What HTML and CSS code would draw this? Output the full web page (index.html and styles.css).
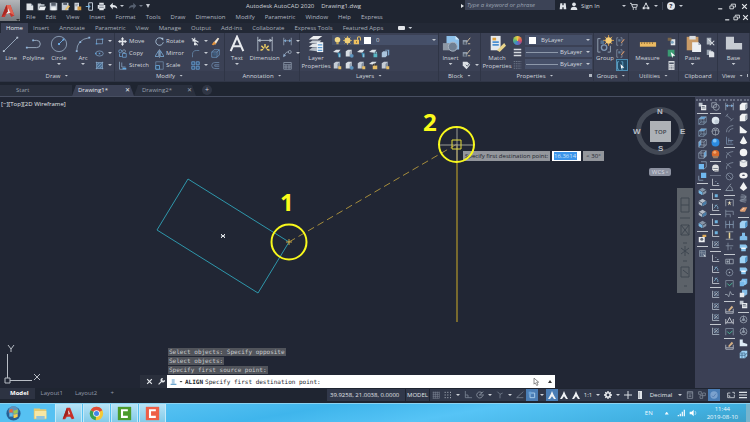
FILE: index.html
```
<!DOCTYPE html>
<html lang="en">
<head>
<meta charset="utf-8">
<title>Autodesk AutoCAD 2020 - Drawing1.dwg</title>
<link rel="stylesheet" href="styles.css">
</head>
<body>
<svg class="defs" aria-hidden="true">
<defs>
<symbol id="new" viewBox="0 0 12 12"><path d="M2 2h6l3 3v6H2z" fill="#dfe3e8"/><path d="M8 2v3h3" fill="#8d96a3"/></symbol>
<symbol id="open" viewBox="0 0 12 12"><path d="M1 2h4l1 1h4v2H4l-2 6H1z" fill="#c9cfd6"/><path d="M4 6h8l-2 5H2z" fill="#eef1f4"/></symbol>
<symbol id="save" viewBox="0 0 12 12"><path d="M1 1h9l1 1v9H1z" fill="#c3cad3"/><path d="M3 1h6v4H3z" fill="#59616f"/><path d="M3 7h6v4H3z" fill="#f2f4f6"/></symbol>
<symbol id="saveas" viewBox="0 0 12 12"><path d="M1 1h9v10H1z" fill="#c3cad3"/><path d="M3 1h5v3H3z" fill="#59616f"/><path d="M5 10l5-6 2 2-5 5z" fill="#e5bd68"/></symbol>
<symbol id="doc" viewBox="0 0 12 12"><path d="M2 1h6v10H2z" fill="#d9dde2"/><path d="M6 6h5v5H6z" fill="#d29a45"/><path d="M3 3h4M3 5h3" stroke="#70788a"/></symbol>
<symbol id="phone" viewBox="0 0 12 12"><path d="M5 1h5v10H5z" fill="none" stroke="#bfc9d5" stroke-width="1.3"/><path d="M1 6h5M4 4l3 2-3 2" fill="none" stroke="#79b3df" stroke-width="1.3"/></symbol>
<symbol id="print" viewBox="0 0 12 12"><path d="M3 1h6v3h2v5H9v2H3V9H1V4h2z" fill="#dfe3e8"/><path d="M3 7h6M3 4h6" stroke="#565f6e"/></symbol>
<symbol id="undo" viewBox="0 0 12 12"><path d="M1 5l4-4v3c4 0 6 2 6 5-2-2-3-2-6-2v3z" fill="#e3e7ec"/></symbol>
<symbol id="redo" viewBox="0 0 12 12"><path d="M11 5L7 1v3C3 4 1 6 1 9c2-2 3-2 6-2v3z" fill="#566070"/></symbol>
<symbol id="binoc" viewBox="0 0 12 12"><path d="M2 2h3v3h2V2h3l1 9H7V8H5v3H1z" fill="#dfe3e8"/></symbol>
<symbol id="user" viewBox="0 0 12 12"><circle cx="6" cy="3.5" r="2.8" fill="#dfe3e8"/><path d="M1 12c0-4 2-5 5-5s5 1 5 5z" fill="#dfe3e8"/></symbol>
<symbol id="cart" viewBox="0 0 12 12"><path d="M0 2h2l2 6h6l1-4H3" fill="none" stroke="#dfe3e8" stroke-width="1.4"/><circle cx="5" cy="10.5" r="1.1" fill="#dfe3e8"/><circle cx="9" cy="10.5" r="1.1" fill="#dfe3e8"/></symbol>
<symbol id="tri" viewBox="0 0 12 12"><path d="M6 2L2 9h8z" fill="none" stroke="#dfe3e8" stroke-width="1.4"/><path d="M1 8h3v3H1zM8 8h3v3H8zM5 1h2v2H5z" fill="#dfe3e8"/></symbol>
<symbol id="min" viewBox="0 0 12 12"><path d="M2 9h7v2H2z" fill="#e6e9ed"/></symbol>
<symbol id="restore" viewBox="0 0 12 12"><path d="M4 4V2h7v5H9M1.500 5h6v5h-6z" fill="none" stroke="#e6e9ed" stroke-width="1.500"/></symbol>
<symbol id="close" viewBox="0 0 12 12"><path d="M2 2l8 8M10 2l-8 8" stroke="#e6e9ed" stroke-width="2"/></symbol>

<symbol id="rect" viewBox="0 0 12 12"><path d="M2 3h8v6H2z" fill="none" stroke="#7f9fc0"/><path d="M1 8h2v2H1zM9 2h2v2H9z" fill="#5fa0d8"/></symbol>
<symbol id="ellipse" viewBox="0 0 12 12"><ellipse cx="6" cy="6" rx="5" ry="3.400" fill="none" stroke="#7f9fc0"/><path d="M5 5h2v2H5zM0 5h2v2H0z" fill="#5fa0d8"/></symbol>
<symbol id="hatch" viewBox="0 0 12 12"><path d="M2 2h8v8H2z" fill="#4d6f93"/><path d="M1 2h10M1 10h10M2 1v10M10 1v10M3 9l6-6M3 5l2-2M7 9l2-2" stroke="#8fb2d4" stroke-width=".8"/></symbol>
<symbol id="move" viewBox="0 0 12 12"><path d="M6 0l2.200 3H7v2h2V3.800L12 6 9 8.200V7H7v2h1.200L6 12 3.800 9H5V7H3v1.200L0 6l3-2.200V5h2V3H3.800z" fill="#e3e7ec"/></symbol>
<symbol id="copy" viewBox="0 0 12 12"><circle cx="3" cy="3" r="2" fill="none" stroke="#6ea6d8"/><circle cx="8" cy="3" r="2" fill="none" stroke="#8aa1ba"/><path d="M6 6h5v5H6zM2 6v4h3" fill="none" stroke="#6ea6d8"/></symbol>
<symbol id="stretch" viewBox="0 0 12 12"><path d="M2 1v10h9M5 2v6h5" fill="none" stroke="#8aa8c5"/><path d="M6 9h5v2H6z" fill="#62a8e2"/></symbol>
<symbol id="rotate" viewBox="0 0 12 12"><path d="M9 2a5 5 0 1 0 2 5" fill="none" stroke="#a8bfd6" stroke-width="1.200"/><path d="M7 1h4v4z" fill="#a8bfd6"/></symbol>
<symbol id="mirror" viewBox="0 0 12 12"><path d="M5 2v8H0zM7 2v8h5z" fill="none" stroke="#7fb0dc"/><path d="M6 0v12" stroke="#b9c7d6" stroke-width=".6"/></symbol>
<symbol id="scale" viewBox="0 0 12 12"><path d="M1 1h10v10H1z" fill="none" stroke="#6d8aa8"/><path d="M1 6h5v5H1z" fill="#31465f" stroke="#6eb0ea"/></symbol>
<symbol id="trim" viewBox="0 0 12 12"><path d="M1 2l9 5M5 1v6l4 4" stroke="#dfe3e8" stroke-width="1.400" fill="none"/><path d="M2 4h5v2H2zM4 8h3v3H4z" fill="#dfe3e8"/></symbol>
<symbol id="fillet" viewBox="0 0 12 12"><path d="M2 11V7c0-3 2-5 5-5h4" fill="none" stroke="#6386a8" stroke-width="1.100"/></symbol>
<symbol id="array" viewBox="0 0 12 12"><path d="M1 1h4v4H1zM7 1h4v4H7zM1 7h4v4H1zM7 7h4v4H7z" fill="#34547a" stroke="#6ea6d8"/></symbol>
<symbol id="erase" viewBox="0 0 12 12"><path d="M3 8l6-7 2 1-5 8z" fill="#efe3d0"/><path d="M1 10l3-4 3 3-4 2z" fill="#e0913d"/></symbol>
<symbol id="box" viewBox="0 0 12 12"><path d="M1 4h7v7H1zM1 4l3-3h7v7l-3 3M8 4l3-3" fill="none" stroke="#6b9cca"/><path d="M3 5h4v4H3z" fill="#3c5c7e"/></symbol>
<symbol id="offset" viewBox="0 0 12 12"><path d="M11 2H5a4 4 0 0 0 0 8h6M11 5H5v2h6" fill="none" stroke="#6f8eb0"/></symbol>
<symbol id="dim" viewBox="0 0 12 12"><path d="M1 1v10M11 1v10M1 5h10" fill="none" stroke="#9eacbd"/><path d="M1 5l3-2v4zM11 5L8 3v4z" fill="#79a7d2"/></symbol>
<symbol id="leader" viewBox="0 0 12 12"><path d="M1 9l4-5h3" fill="none" stroke="#9eacbd"/><circle cx="9" cy="4" r="2" fill="none" stroke="#9eacbd"/><path d="M0 11l1-5 3 3z" fill="#8ba8c7"/></symbol>
<symbol id="table" viewBox="0 0 12 12"><path d="M1 2h10v9H1zM1 5h10M1 8h10M4 5v6M8 5v6" fill="none" stroke="#9eacbd" stroke-width=".9"/></symbol>
<symbol id="bulb" viewBox="0 0 12 12"><circle cx="6" cy="5" r="3.700" fill="#f2d98a"/><path d="M4.500 8h3v3h-3z" fill="#c8a95a"/></symbol>
<symbol id="sun" viewBox="0 0 12 12"><path d="M6 0v12M0 6h12M2 2l8 8M10 2l-8 8" stroke="#d8b35a"/><circle cx="6" cy="6" r="4" fill="#f0cf78"/></symbol>
<symbol id="lock" viewBox="0 0 12 12"><path d="M6 5V3q0-2 2-2t2 2v3" fill="none" stroke="#e5bd60" stroke-width="1.400"/><path d="M1 5h7v6H1z" fill="#efc060"/><path d="M4 7h1v2H4z" fill="#4c4638"/></symbol>
<symbol id="la" viewBox="0 0 12 12"><path d="M0 4l4-3h6L7 5z" fill="#dce2e8"/><path d="M6 5h4v6H7z" fill="#3f8fb4"/><path d="M9 7v4" stroke="#d8e4ee"/></symbol>
<symbol id="lb" viewBox="0 0 12 12"><path d="M1 3l3-2h5v7l-3 2H1z" fill="#d8dde3"/><path d="M6 4l3-3v7l-3 2z" fill="#98a3b2"/><circle cx="9" cy="9" r="2.500" fill="#5c93be"/></symbol>
<symbol id="lc" viewBox="0 0 12 12"><path d="M1 3l3-2h5v7l-3 2H1z" fill="#c5ccd5"/><path d="M6 4l3-3v7l-3 2z" fill="#7e8a9a"/><path d="M7 7h4v4H7z" fill="#e6bd65"/></symbol>
<symbol id="ld" viewBox="0 0 12 12"><path d="M0 4l4-3h6L7 5z" fill="#dce2e8"/><path d="M6 6h5v5H6z" fill="#58b7c4"/><path d="M7 6V4h3v2" fill="none" stroke="#9bd4dd"/></symbol>
<symbol id="lu" viewBox="0 0 12 12"><path d="M0 4l4-3h6L7 5z" fill="#dce2e8"/><path d="M5 6h6v5H5z" fill="#e6bd65"/><path d="M6 6V4h3v2" fill="none" stroke="#39332b" stroke-width="1.200"/></symbol>
<symbol id="le" viewBox="0 0 12 12"><path d="M1 5l2-2h5v6l-2 2H1z" fill="#aac4dc"/><path d="M5 2l1-1h5v7l-2 1V2z" fill="#7ba5ca"/></symbol>
<symbol id="bed" viewBox="0 0 12 12"><path d="M1 4h6v6H1z" fill="#8b98aa"/><circle cx="4" cy="8" r="2" fill="#56606f"/><path d="M6 7l5-6M8 9h3" stroke="#d9c3a3" stroke-width="1.200"/></symbol>
<symbol id="tag" viewBox="0 0 12 12"><path d="M1 1h6l4 4-5 6-5-5z" fill="#dde1e6"/><path d="M5 5l2 2 4-5" fill="none" stroke="#555f70" stroke-width="1.200"/></symbol>
<symbol id="lw" viewBox="0 0 12 12"><path d="M1 1h10v2H1zM1 5h10v2H1zM1 9h10v2H1z" fill="#d5d9df"/></symbol>
<symbol id="lt" viewBox="0 0 12 12"><path d="M1 2h10M1 5h10M1 8h10M1 11h10" stroke="#7b8596" stroke-dasharray="2 1"/></symbol>
<symbol id="grp" viewBox="0 0 12 12"><path d="M3 1H1v10h2M6 1h2v4M6 11h2V8" fill="none" stroke="#8997a9"/><path d="M3 3h3v3H3z" fill="#64809c"/><path d="M7 8l4-5" stroke="#d79a6d" stroke-width="1.500"/></symbol>
<symbol id="grpsel" viewBox="0 0 12 12"><path d="M4 1H2v10h2M7 1h2v10H7" fill="none" stroke="#6fb4d8"/><path d="M6 4l5 5H8l-1 2z" fill="#fff"/></symbol>
<symbol id="quick" viewBox="0 0 12 12"><path d="M5 3h6v8H5z" fill="#dfe4e9"/><path d="M1 1h5v4H1z" fill="#7a674b"/><circle cx="7" cy="7" r="2" fill="#78a2bf"/></symbol>
<symbol id="green" viewBox="0 0 12 12"><path d="M1 1h9v9H1z" fill="#3b9b73"/><path d="M5 4l6 5H8l-1 3z" fill="#fff"/></symbol>
<symbol id="calc" viewBox="0 0 12 12"><path d="M2 0h8v12H2z" fill="#d4d8dd"/><path d="M3 2h6v2H3z" fill="#4b5364"/><path d="M4 6v5M6 6v5M8 6v5" stroke="#4b5364" stroke-dasharray="1 1"/></symbol>
<symbol id="props" viewBox="0 0 12 12"><path d="M2 1h8v10H2zM2 3h8M4 6h4M4 8h4" fill="none" stroke="#98a1af"/></symbol>
<symbol id="cut" viewBox="0 0 12 12"><path d="M1 1h6v9H1z" fill="#aab2bc"/><path d="M3 3l8 8M11 5l-6 6" stroke="#dfe3e8" stroke-width="1.400"/></symbol>
<symbol id="cpy" viewBox="0 0 12 12"><path d="M1 1h6v7H1z" fill="#9aa4b1"/><path d="M4 3h5l2 2v6H4z" fill="#dfe3e8"/></symbol>

<symbol id="stack" viewBox="0 0 12 12"><path d="M1 1h5v5H1z" fill="#bfc6cf"/><path d="M4 4h7v7H4z" fill="#e7eaee"/><path d="M5 6h4M5 8h5" stroke="#4f586a"/></symbol>
<symbol id="cubet" viewBox="0 0 12 12"><path d="M1 4l3-3h7L8 4z" fill="#5fa2da"/><path d="M1 4h7v7H1zM1 4l3-3h7v7l-3 3M8 4l3-3M4 1v7h7M4 8l-3 3" fill="none" stroke="#8ea7c0" stroke-width=".8"/></symbol>
<symbol id="cubel" viewBox="0 0 12 12"><path d="M1 4l3-3v7l-3 3z" fill="#5fa2da"/><path d="M1 4h7v7H1zM1 4l3-3h7v7l-3 3M8 4l3-3M4 1v7h7" fill="none" stroke="#a5b4c5" stroke-width=".8"/></symbol>
<symbol id="cuber" viewBox="0 0 12 12"><path d="M8 4l3-3v7l-3 3z" fill="#5fa2da"/><path d="M1 4h7v7H1zM1 4l3-3h7v7l-3 3M8 4l3-3M4 1v7h7" fill="none" stroke="#a5b4c5" stroke-width=".8"/></symbol>
<symbol id="cubef" viewBox="0 0 12 12"><path d="M4 1h7v7l-3 3" fill="none" stroke="#91a8c0"/><path d="M1 4h7v7H1z" fill="#70b8ef"/></symbol>
<symbol id="cubeb" viewBox="0 0 12 12"><path d="M1 5v6h6" fill="none" stroke="#91a8c0"/><path d="M4 1h7v7H4z" fill="#70b8ef"/></symbol>
<symbol id="iso" viewBox="0 0 12 12"><path d="M6 1l5 3v4l-5 3-5-3V4z" fill="#b4bec9"/><path d="M1 4l5 3 5-3M6 7v5" fill="none" stroke="#3a4356"/><path d="M6 7l5-3v4l-5 3z" fill="#487ca8"/></symbol>
<symbol id="isol" viewBox="0 0 12 12"><path d="M6 1l5 3v4l-5 3-5-3V4z" fill="#8795a6"/><path d="M1 4l5 3 5-3M6 7v5" fill="none" stroke="#2c3444"/><path d="M1 4l5 3v4L1 8z" fill="#74b8e4"/></symbol>
<symbol id="cam" viewBox="0 0 12 12"><path d="M1 4h8v7H1z" fill="#eceef0"/><circle cx="5" cy="7" r="2" fill="#606875"/><path d="M6 1h5v3H6z" fill="#e2ae58"/></symbol>
<symbol id="sel" viewBox="0 0 12 12"><path d="M2 2h8v8H2zM2 5h8M5 2v8" fill="#50617a" stroke="#8793a3"/><path d="M7 6l4 4H8z" fill="#cfd5dc"/></symbol>
<symbol id="wire" viewBox="0 0 12 12"><path d="M1 1h6v6H1z" fill="none" stroke="#a6afbb"/><circle cx="7" cy="7" r="4" fill="none" stroke="#a6afbb"/></symbol>
<symbol id="sphw" viewBox="0 0 12 12"><circle cx="6" cy="6" r="5" fill="#dfe8ef"/><circle cx="7.500" cy="7.500" r="3" fill="#c2ced9"/></symbol>
<symbol id="sphn" viewBox="0 0 12 12"><circle cx="6" cy="6" r="4.700" fill="none" stroke="#aab3bf"/><path d="M1 6l5-2 5 2M6 4v7M3 2l3 2 3-2" fill="none" stroke="#aab3bf" stroke-width=".8"/></symbol>
<symbol id="sphb" viewBox="0 0 12 12"><circle cx="6" cy="6" r="5.300" fill="#2b8be0"/><circle cx="5" cy="3.500" r="2.500" fill="#7cc3f8"/></symbol>
<symbol id="spho" viewBox="0 0 12 12"><circle cx="6" cy="5" r="5" fill="#d6692c"/><path d="M2 8h8l-1 3H3z" fill="#9b7c62"/><circle cx="5" cy="3" r="2" fill="#f0a56b"/></symbol>
<symbol id="sphs" viewBox="0 0 12 12"><circle cx="6" cy="5" r="4.500" fill="#dfe1e2"/><path d="M1 7h9v3H5z" fill="#efefed"/><path d="M3 6h6M4 9h5" stroke="#606875"/></symbol>
<symbol id="ucs" viewBox="0 0 12 12"><path d="M2 1v9h9" fill="none" stroke="#d5dae0"/><path d="M6 4h1v1H6zM8 7h2v1H8z" fill="#b7cfdf"/></symbol>
<symbol id="ucsb" viewBox="0 0 12 12"><path d="M2 1v9h9" fill="none" stroke="#d5dae0"/><path d="M5 3h4v4H5z" fill="#6eb3df"/></symbol>
<symbol id="ucsc" viewBox="0 0 12 12"><path d="M2 1v9h9" fill="none" stroke="#d5dae0"/><path d="M4 7l4-5M5 3q5 0 4 5" fill="none" stroke="#82b5d5"/></symbol>
<symbol id="ucsx" viewBox="0 0 12 12"><path d="M2 1v9h9M4 2l6 6M10 2L4 8" fill="none" stroke="#b8c3cf"/><circle cx="7" cy="5" r="3" fill="none" stroke="#7790aa"/></symbol>
<symbol id="dal" viewBox="0 0 12 12"><path d="M2 3l7 6M1 5l3-4M7 11l4-4" fill="none" stroke="#8894a5"/></symbol>
<symbol id="arc" viewBox="0 0 12 12"><path d="M2 11q0-8 9-9M5 11q0-4 6-5" fill="none" stroke="#8894a5"/></symbol>
<symbol id="ord" viewBox="0 0 12 12"><path d="M2 1v10h9M5 3v6M8 5v4M4 6h7" fill="none" stroke="#7b92af"/></symbol>
<symbol id="rad" viewBox="0 0 12 12"><path d="M2 11q-1-8 9-9M2 3l6 6" fill="none" stroke="#8894a5"/></symbol>
<symbol id="dia" viewBox="0 0 12 12"><circle cx="6" cy="6" r="4.500" fill="none" stroke="#8894a5"/><path d="M3 3l6 6" stroke="#8894a5"/></symbol>
<symbol id="ang" viewBox="0 0 12 12"><path d="M8 1L1 10h10M7 4q3 2 3 6" fill="none" stroke="#9aa5b3"/></symbol>
<symbol id="dimq" viewBox="0 0 12 12"><path d="M1 11V2h10v9" fill="none" stroke="#a6afbb"/><path d="M6 4l1 2h2L7 7l1 3-2-2-2 2 1-3-2-1h2z" fill="#ece1bd"/></symbol>
<symbol id="dimb" viewBox="0 0 12 12"><path d="M1 1v10M1 3h10v5M1 7h6v4" fill="none" stroke="#8894a5"/></symbol>
<symbol id="dimc" viewBox="0 0 12 12"><path d="M1 1v10M6 1v10M11 1v10M1 6h10" fill="none" stroke="#8aa0b9"/></symbol>
<symbol id="dimi" viewBox="0 0 12 12"><path d="M1 1h10M1 11h10" stroke="#a6afbb"/><path d="M5 2h2v8H5z" fill="#e9d695"/></symbol>
<symbol id="dimx" viewBox="0 0 12 12"><path d="M1 5h10M4 1v10M8 7v3" fill="none" stroke="#8894a5"/></symbol>
<symbol id="tol" viewBox="0 0 12 12"><path d="M1 3h10v6H1zM6 3v6" fill="none" stroke="#a6afbb"/><circle cx="3.500" cy="6" r="1.500" fill="#a6afbb"/></symbol>
<symbol id="cen" viewBox="0 0 12 12"><circle cx="6" cy="6" r="4.500" fill="none" stroke="#8894a5"/><path d="M5 6h2M6 5v2" stroke="#b9c1cb"/></symbol>
<symbol id="insp" viewBox="0 0 12 12"><path d="M1 11V2h10v9" fill="none" stroke="#8894a5"/><path d="M3 6l3 3 4-4" fill="none" stroke="#48b894" stroke-width="1.300"/></symbol>
<symbol id="jog" viewBox="0 0 12 12"><path d="M0 6h3l2 3 2-7 2 4h3" fill="none" stroke="#a6afbb"/></symbol>
<symbol id="ded" viewBox="0 0 12 12"><path d="M1 5v6h10V5M1 9h10" fill="none" stroke="#c4cad2"/><path d="M4 7l5-6 2 2-5 5z" fill="#d7b184"/></symbol>
<symbol id="dtx" viewBox="0 0 12 12"><path d="M1 4v7M11 4v7M1 9h10M3 8l3-6 3 6" fill="none" stroke="#e0e4e9"/></symbol>
<symbol id="solbox" viewBox="0 0 12 12"><path d="M1 4l3-3h7v7l-3 3H1z" fill="#f2f3f4"/><path d="M8 4l3-3v7l-3 3z" fill="#a7afb9"/></symbol>
<symbol id="solw" viewBox="0 0 12 12"><path d="M1 1l10 8-2 2H1z" fill="#f2f3f4"/></symbol>
<symbol id="solc" viewBox="0 0 12 12"><path d="M6 0l5 9q-5 4-10 0z" fill="#f2f3f4"/></symbol>
<symbol id="pyr" viewBox="0 0 12 12"><path d="M6 0l5 8-5 4-5-4z" fill="#f2f3f4"/></symbol>
<symbol id="sols" viewBox="0 0 12 12"><circle cx="6" cy="6" r="5" fill="#f2f3f4"/></symbol>
<symbol id="soly" viewBox="0 0 12 12"><path d="M1 3q5-4 10 0v6q-5 4-10 0z" fill="#e9ebed"/><path d="M1 3q5 3 10 0" fill="none" stroke="#9ca5b1"/></symbol>
<symbol id="solt" viewBox="0 0 12 12"><ellipse cx="6" cy="6" rx="5.500" ry="4" fill="#f2f3f4"/><ellipse cx="6" cy="5.500" rx="2" ry="1" fill="#3b4155"/></symbol>
<symbol id="helix" viewBox="0 0 12 12"><path d="M2 3h8M2 5h8M2 7h8M2 9h8" stroke="#8b96a6"/><path d="M3 1q6 0 6 3t-6 4 6 3" fill="none" stroke="#8b96a6"/></symbol>
<symbol id="plane" viewBox="0 0 12 12"><path d="M1 7l4-4h6L8 9H2z" fill="#dc9c72"/><path d="M4 7l3-3" stroke="#fff0dc"/></symbol>
<symbol id="bbox" viewBox="0 0 12 12"><path d="M1 4l3-3h7v7l-3 3H1z" fill="#9fd2f4"/><path d="M8 4l3-3v7l-3 3z" fill="#559bd0"/></symbol>
<symbol id="bcyl" viewBox="0 0 12 12"><path d="M4 1h4v4l3 1v5H1V6l3-1z" fill="#80bfec"/></symbol>
<symbol id="bcup" viewBox="0 0 12 12"><path d="M1 2h8l2 2v3H9v4H3V7H1z" fill="#8bc6ef"/><path d="M3 7h6" stroke="#f2f8fd" stroke-width="2"/></symbol>
<symbol id="buni" viewBox="0 0 12 12"><path d="M4 1h7v6l-2 2H8l-2 2H1V5l2-1z" fill="#78b9ea"/><path d="M1 5l2-1h5v5" fill="none" stroke="#b9def8"/></symbol>
<symbol id="bsub" viewBox="0 0 12 12"><path d="M4 1h7v6l-3 2H4z" fill="#85bde8"/><path d="M1 5h6v6H1z" fill="#e7eaee"/></symbol>
<symbol id="gear3" viewBox="0 0 12 12"><circle cx="6" cy="6" r="4.500" fill="none" stroke="#9da7b5"/><circle cx="6" cy="6" r="2" fill="#8b96a6"/><path d="M6 1v3M2 9l2-2M10 9L8 7" stroke="#9da7b5"/></symbol>
<symbol id="bl" viewBox="0 0 12 12"><path d="M1 2h4v4l6 2v3H1z" fill="#ddebf5"/></symbol>
<symbol id="bgrid" viewBox="0 0 12 12"><path d="M1 4l3-3h7v7l-3 3H1z" fill="#9fd2f4"/><path d="M1 7h7l3-3M4 4v7M1 4h7v7" fill="none" stroke="#42698b"/></symbol>

<symbol id="g1" viewBox="0 0 12 12"><path d="M2 1v10M5 1v10M8 1v10M11 1v10M1 2h10M1 5h10M1 8h10M1 11h10" stroke="#858e9d" stroke-width=".8"/></symbol>
<symbol id="g2" viewBox="0 0 12 12"><path d="M1 2h10M1 6h10M1 10h10" stroke="#b6bdc7" stroke-width="1.500" stroke-dasharray="1.500 2.500"/></symbol>
<symbol id="ortho" viewBox="0 0 12 12"><path d="M2 0v10h10M2 6h4v4" fill="none" stroke="#8b95a4"/></symbol>
<symbol id="polar" viewBox="0 0 12 12"><path d="M9 3a4.500 4.500 0 1 0 1 4M5 6h7M5 6l6-5" fill="none" stroke="#a5aeba"/></symbol>
<symbol id="isod" viewBox="0 0 12 12"><path d="M2 1l4 4v6M6 5l4-2" fill="none" stroke="#858f9e"/></symbol>
<symbol id="angl" viewBox="0 0 12 12"><path d="M11 1L1 10h10" fill="none" stroke="#858f9e"/></symbol>
<symbol id="osnap" viewBox="0 0 12 12"><path d="M3 3h7v7H3z" fill="none" stroke="#b3d4f0" stroke-width="1.300"/><path d="M1 1h4v4H1z" fill="#6aa5dc"/></symbol>
<symbol id="ann" viewBox="0 0 12 12"><path d="M6 0l2 5 4 7H9L6 8l-3 4H0l4-7z" fill="#eef1f4"/></symbol>
<symbol id="gear" viewBox="0 0 12 12"><path d="M6 0v12M0 6h12M2 2l8 8M10 2l-8 8" stroke="#f0f2f5" stroke-width="2"/><circle cx="6" cy="6" r="3.200" fill="#31384a" stroke="#f0f2f5" stroke-width="2"/></symbol>
<symbol id="plus" viewBox="0 0 12 12"><path d="M6 0v12M0 6h12" stroke="#d9dde3" stroke-width="1.500"/></symbol>
<symbol id="bar" viewBox="0 0 12 12"><path d="M3 0h6v12H3z" fill="#dfe2e6"/><path d="M4 3h2M4 6h2M4 9h2" stroke="#606979"/></symbol>
<symbol id="iso2" viewBox="0 0 12 12"><path d="M1 1h4v4H1zM7 3h4v4H7zM3 7h4v4H3z" fill="none" stroke="#8b95a4"/></symbol>
<symbol id="perf" viewBox="0 0 12 12"><circle cx="6" cy="6" r="5.500" fill="#7ba2ce"/><path d="M3 7l2 2 4-5" fill="none" stroke="#5b82b4" stroke-width="1.500"/></symbol>
<symbol id="full" viewBox="0 0 12 12"><path d="M5 3H1v7h10V6M8 2h3v3M3 8V6M3 8h2" fill="none" stroke="#d6dae0" stroke-width="1.200"/></symbol>
<symbol id="burger" viewBox="0 0 12 12"><path d="M0 2h12M0 6h12M0 10h12" stroke="#dfe3e8" stroke-width="1.700"/></symbol>
</defs>
</svg>

<header class="top">
  <button class="app" aria-label="Application menu"><svg viewBox="0 0 20 20"><path d="M2 17L8 2h5l5 13-4 2-2-4H8l-2 4z" fill="#c5362f"/><path d="M8 2l2 8 8 5-5-13z" fill="#e26553"/><path d="M8 13l2-7 3 6z" fill="#ececec"/><path d="M2 17l8-7-2-8z" fill="#a92822"/></svg><i class="caret dark"></i></button>
  <div class="bars">
    <div class="title">
      <div class="qat">
        <button aria-label="New"><svg><use href="#new"/></svg></button><button aria-label="Open"><svg><use href="#open"/></svg></button><button aria-label="Save"><svg><use href="#save"/></svg></button><button aria-label="Save as"><svg><use href="#saveas"/></svg></button><button aria-label="Web"><svg><use href="#doc"/></svg></button><button aria-label="Mobile"><svg><use href="#phone"/></svg></button><button aria-label="Plot"><svg><use href="#print"/></svg></button><button aria-label="Undo"><svg><use href="#undo"/></svg></button><i class="caret"></i><button aria-label="Redo"><svg><use href="#redo"/></svg></button><i class="caret dim"></i><i class="caret big"></i>
      </div>
      <h1><span>Autodesk AutoCAD 2020</span><span>Drawing1.dwg</span></h1>
      <div class="info">
        <i class="play"></i><input type="search" aria-label="Search" placeholder="Type a keyword or phrase">
        <button aria-label="Find"><svg><use href="#binoc"/></svg></button><button class="sign"><svg><use href="#user"/></svg>Sign In</button>
        <span class="tail"><i class="caret"></i><button aria-label="Store"><svg><use href="#cart"/></svg></button><button aria-label="Stay connected"><svg><use href="#tri"/></svg></button><i class="caret"></i><i class="rule"></i><button class="help" aria-label="Help">?</button><i class="caret"></i></span>
        <span class="win"><button aria-label="Minimize"><svg><use href="#min"/></svg></button><button aria-label="Restore"><svg><use href="#restore"/></svg></button><button aria-label="Close"><svg><use href="#close"/></svg></button></span>
      </div>
    </div>
    <nav class="menu">
      <a href="#">File</a><a href="#">Edit</a><a href="#">View</a><a href="#">Insert</a><a href="#">Format</a><a href="#">Tools</a><a href="#">Draw</a><a href="#">Dimension</a><a href="#">Modify</a><a href="#">Parametric</a><a href="#">Window</a><a href="#">Help</a><a href="#">Express</a>
      <span class="win small"><button aria-label="Minimize drawing"><svg><use href="#min"/></svg></button><button aria-label="Restore drawing"><svg><use href="#restore"/></svg></button><button aria-label="Close drawing"><svg><use href="#close"/></svg></button></span>
    </nav>
  </div>
</header>

<nav class="rtabs">
  <a class="on" href="#">Home</a><a href="#">Insert</a><a href="#">Annotate</a><a href="#">Parametric</a><a href="#">View</a><a href="#">Manage</a><a href="#">Output</a><a href="#">Add-ins</a><a href="#">Collaborate</a><a href="#">Express Tools</a><a href="#">Featured Apps</a>
  <button class="pill" aria-label="Minimize ribbon"><b></b><i class="caret"></i></button>
</nav>

<section class="ribbon">
  <div class="panel">
    <div class="body draw">
      <button class="bigb"><svg viewBox="0 0 20 20"><path d="M2 18L17 3" stroke="#9fb0c4"/><path d="M1 17h2v2H1zM16 2h2v2h-2z" fill="#b9c6d6"/></svg>Line</button>
      <button class="bigb"><svg viewBox="0 0 20 20"><path d="M2 14h11a4 4 0 0 0 0-8H9" fill="none" stroke="#9fb0c4"/><path d="M1 13h2v2H1zM8 5h2v2H8z" fill="#8db3da"/></svg>Polyline</button>
      <button class="bigb"><svg viewBox="0 0 20 20"><circle cx="10" cy="10" r="8.500" fill="none" stroke="#8ea2b9"/><path d="M10 10l5-5" stroke="#6eb0ea"/><path d="M9 9h2v2H9zM14 4h2v2h-2z" fill="#6eb0ea"/></svg>Circle<i class="caret"></i></button>
      <button class="bigb"><svg viewBox="0 0 20 20"><path d="M3 18Q3 5 17 3" fill="none" stroke="#8ea2b9"/><path d="M2 17h2v2H2zM6 7h2v2H6zM16 2h2v2h-2z" fill="#8db3da"/></svg>Arc<i class="caret"></i></button>
      <div class="col"><button aria-label="Rectangle"><svg><use href="#rect"/></svg><i class="caret"></i></button><button aria-label="Ellipse"><svg><use href="#ellipse"/></svg><i class="caret"></i></button><button aria-label="Hatch"><svg><use href="#hatch"/></svg><i class="caret"></i></button></div>
    </div>
    <h2>Draw<i class="caret"></i></h2>
  </div>
  <div class="panel">
    <div class="body modify">
      <div class="col"><button><svg><use href="#move"/></svg>Move</button><button><svg><use href="#copy"/></svg>Copy</button><button><svg><use href="#stretch"/></svg>Stretch</button></div>
      <div class="col"><button><svg><use href="#rotate"/></svg>Rotate</button><button><svg><use href="#mirror"/></svg>Mirror</button><button><svg><use href="#scale"/></svg>Scale</button></div>
      <div class="col"><button aria-label="Trim"><svg><use href="#trim"/></svg><i class="caret"></i></button><button aria-label="Fillet"><svg><use href="#fillet"/></svg><i class="caret"></i></button><button aria-label="Array"><svg><use href="#array"/></svg><i class="caret"></i></button></div>
      <div class="col"><button aria-label="Erase"><svg><use href="#erase"/></svg></button><button aria-label="Explode"><svg><use href="#box"/></svg></button><button aria-label="Offset"><svg><use href="#offset"/></svg></button></div>
    </div>
    <h2>Modify<i class="caret"></i></h2>
  </div>
  <div class="panel">
    <div class="body anno">
      <button class="bigb"><svg viewBox="0 0 20 20"><path d="M3 18L10 2L17 18M6 12.500h8" fill="none" stroke="#e8ebef" stroke-width="2.300"/></svg>Text<i class="caret"></i></button>
      <button class="bigb"><svg viewBox="0 0 20 20"><path d="M2 2v16M18 2v16M2 6h16" fill="none" stroke="#b4bfcc"/><path d="M2 6l3-2v4zM18 6l-3-2v4z" fill="#b4bfcc"/><path d="M5 17l3-1M6 12l3 3M10 10v4M14 12l-3 3M15 17l-3-1" stroke="#f0cf62" stroke-width="1.600"/></svg>Dimension</button>
      <div class="col"><button aria-label="Linear"><svg><use href="#dim"/></svg><i class="caret"></i></button><button aria-label="Leader"><svg><use href="#leader"/></svg><i class="caret"></i></button><button aria-label="Table"><svg><use href="#table"/></svg></button></div>
    </div>
    <h2>Annotation<i class="caret"></i></h2>
  </div>
  <div class="panel">
    <div class="body layers">
      <button class="bigb"><svg viewBox="0 0 20 20"><path d="M2 5l5-4h10l-5 4z" fill="#eceef0"/><path d="M2 9l4-3h10l-4 4z" fill="#c8ced5"/><path d="M2 13l4-3h9l-3 4z" fill="#e1e5e9"/><path d="M2 17l4-3h8l-3 4z" fill="#b3bbc5"/><path d="M11 8h7v11h-7z" fill="#eff3f7"/><path d="M12 11h5M12 14h5M12 17h5" stroke="#5b9bd3" stroke-width="1.500"/></svg>Layer<br>Properties</button>
      <div class="laycol">
        <label class="pick lay"><svg><use href="#bulb"/></svg><svg><use href="#sun"/></svg><svg><use href="#lock"/></svg><b class="sw"></b><select aria-label="Layer"><option>0</option></select><i class="caret"></i></label>
        <div class="icons"><button aria-label="Off"><svg><use href="#la"/></svg></button><button aria-label="Isolate"><svg><use href="#lb"/></svg></button><button aria-label="Freeze"><svg><use href="#la"/></svg></button><button aria-label="Lock"><svg><use href="#ld"/></svg></button><button aria-label="Make current"><svg><use href="#le"/></svg></button></div>
        <div class="icons"><button aria-label="On"><svg><use href="#lc"/></svg></button><button aria-label="Unisolate"><svg><use href="#lb"/></svg></button><button aria-label="Thaw"><svg><use href="#lc"/></svg></button><button aria-label="Unlock"><svg><use href="#lu"/></svg></button><button aria-label="Match layer"><svg><use href="#lc"/></svg></button></div>
      </div>
    </div>
    <h2>Layers<i class="caret"></i></h2>
  </div>
  <div class="panel">
    <div class="body block">
      <button class="bigb"><svg viewBox="0 0 20 20"><path d="M5 1h10l4 4v11H5z" fill="#8cc0ea"/><path d="M15 1v4h4" fill="#d3e7f6"/><path d="M1 9h12v8H1z" fill="#8d97a4"/><circle cx="12" cy="13" r="5" fill="#6f7f92" stroke="#aab6c3"/></svg>Insert<i class="caret"></i></button>
      <div class="col"><button aria-label="Create block"><svg><use href="#bed"/></svg></button><button aria-label="Edit block"><svg><use href="#bed"/></svg></button><button aria-label="Edit attributes"><svg><use href="#tag"/></svg><i class="caret"></i></button></div>
    </div>
    <h2>Block<i class="caret"></i></h2>
  </div>
  <div class="panel">
    <div class="body props">
      <button class="bigb"><svg viewBox="0 0 20 20"><path d="M3 1h11v16H3z" fill="#e4e8ec"/><path d="M5 3h4v3H5z" fill="#e0a23f"/><path d="M5 8h7M5 11h7" stroke="#4b8fd0" stroke-width="2"/><path d="M10 17l8-8 2 3-7 7z" fill="#e9d48a"/></svg>Match<br>Properties</button>
      <div class="pcol">
        <div><b class="wheel"></b><label class="pick"><b class="sw"></b><select aria-label="Color"><option>ByLayer</option></select><i class="caret"></i></label></div>
        <div><svg><use href="#lw"/></svg><label class="pick ln"><hr><select aria-label="Lineweight"><option>ByLayer</option></select><i class="caret"></i></label></div>
        <div><svg><use href="#lt"/></svg><label class="pick ln"><hr><select aria-label="Linetype"><option>ByLayer</option></select><i class="caret"></i></label></div>
      </div>
    </div>
    <h2>Properties<i class="caret"></i><i class="launch"></i></h2>
  </div>
  <div class="panel">
    <div class="body groups">
      <button class="bigb"><svg viewBox="0 0 20 20"><path d="M5 4H2v15h3M13 19h3v-7" fill="none" stroke="#9aa8b9"/><path d="M5 6h4v4H5z" fill="#54708e"/><circle cx="9" cy="14" r="3" fill="none" stroke="#7c95b1" stroke-width="1.500"/><path d="M14 0v12M8 6h12M10 2l8 8M18 2l-8 8" stroke="#dfa451"/><circle cx="14" cy="6" r="3.500" fill="#f6cf78"/></svg>Group</button>
      <div class="col"><button aria-label="Ungroup"><svg><use href="#grp"/></svg></button><button aria-label="Group edit"><svg><use href="#grp"/></svg></button><button class="lit" aria-label="Group selection"><svg><use href="#grpsel"/></svg></button></div>
    </div>
    <h2>Groups<i class="caret"></i></h2>
  </div>
  <div class="panel">
    <div class="body utils">
      <button class="bigb"><svg viewBox="0 0 20 20"><path d="M1 8h18v5H1z" fill="#ecba61"/><path d="M3 8v2M6 8v2M9 8v2M12 8v2M15 8v2" stroke="#8a6936"/></svg>Measure<i class="caret"></i></button>
      <div class="col"><button aria-label="Quick select"><svg><use href="#quick"/></svg></button><button aria-label="Select all"><svg><use href="#green"/></svg></button><button aria-label="Calculator"><svg><use href="#calc"/></svg></button></div>
    </div>
    <h2>Utilities<i class="caret"></i></h2>
  </div>
  <div class="panel">
    <div class="body clip">
      <button class="bigb"><svg viewBox="0 0 20 20"><path d="M3 2h13v15H3z" fill="#c99b67"/><path d="M6 1h7v4H6z" fill="#d8dce1"/><path d="M9 8h7l3 3v8H9z" fill="#eceff2"/><path d="M16 8v3h3" fill="#9ea8b4"/></svg>Paste<i class="caret"></i></button>
      <div class="col"><button aria-label="Cut"><svg><use href="#cut"/></svg></button><button aria-label="Copy clip"><svg><use href="#cpy"/></svg></button></div>
    </div>
    <h2>Clipboard</h2>
  </div>
  <div class="panel">
    <div class="body view"><button class="bigb"><svg viewBox="0 0 20 20"><path d="M1 2h9v7h9v7H1z" fill="#c6cbd2"/></svg>Base<i class="caret"></i></button></div>
    <h2>View<i class="caret"></i><i class="launch"></i></h2>
  </div>
</section>

<nav class="files">
  <a href="#">Start</a><a class="on" href="#">Drawing1*<i>✕</i></a><a href="#">Drawing2*<i>✕</i></a><button aria-label="New drawing">+</button>
</nav>

<main>
  <section class="canvas">
    <p class="vp">[−][Top][2D Wireframe]</p>
    <svg class="drawing">
      <path d="M188 82L289 145L258 196L157 133Z" fill="none" stroke="#2f97ab"/>
      <path d="M289 145L457 47" stroke="#a58c3c" stroke-dasharray="7 4"/>
      <path d="M457 47V225" stroke="#a88f2c" stroke-width="1.300"/>
      <path d="M457 29v35M439 48h36" stroke="#9c9d94"/>
      <path d="M221 137l4 4M225 137l-4 4M221 139h4" stroke="#dfe3e7"/>
      <path d="M286 145h6M289 142v6" stroke="#c9a545"/>
      <path d="M452 43h9v9h-9z" fill="none" stroke="#e5dd38"/>
      <circle cx="289" cy="145" r="17.500" fill="none" stroke="#f8f81c" stroke-width="2"/>
    </svg>
    <span class="num one">1</span><span class="num two">2</span>
    <div class="dyn"><label for="dist">Specify first destination point:</label><input id="dist" value="16.3614"><output>&lt; 30°</output></div>
    <svg class="ring"><circle cx="18.500" cy="18.500" r="17.500" fill="none" stroke="#f8f81c" stroke-width="2"/></svg>
    <div class="cube"><b class="n">N</b><b class="w">W</b><button>TOP</button><b class="e">E</b><b class="s">S</b></div>
    <button class="wcs">WCS ▫</button>
    <div class="navbar"><svg viewBox="0 0 16 105" fill="none" stroke="#3e4650"><path d="M4 10v14h8V10zM4 17h8M3 30h10M4 37l8 10M12 37l-8 10M4 37h8v10H4zM6 55h4M4 60l8 6M12 60l-8 6M8 58v10M6 73h4M4 79h8v10H4zM6 82l5 4M7 98h3"/></svg></div>
    <svg class="axis" viewBox="0 0 42 42" fill="none" stroke="#b8bdc5"><path d="M7.500 34V10M10 36.500h22M5 34h5v5H5zM34 30l6 6M40 30l-6 6M8 1l3 4 3-4M11 5v3"/></svg>
    <div class="cmd">
      <p>Select objects: Specify opposite</p><p>Select objects:</p><p>Specify first source point:</p>
      <div class="cline">
        <div class="grip"><svg viewBox="0 0 12 12"><use href="#close"/></svg><svg viewBox="0 0 12 12"><path d="M1 11l6-6M7 1a3 3 0 1 0 4 4L9 6 6 4z" stroke="#e4e7eb" stroke-width="2" fill="none"/></svg></div>
        <label for="cmd"><svg viewBox="0 0 12 12"><path d="M3 1h5v8H3z" fill="#aacbe4"/><path d="M1 9h10v2H1z" fill="#5f9dca"/></svg><i class="caret dark"></i><b>ALIGN</b>Specify first destination point:</label><input id="cmd" aria-label="Command">
        <svg class="ptr" viewBox="0 0 12 12"><path d="M3 1l7 6H7l2 4-2 1-2-4-2 2z" fill="#fff" stroke="#555"/></svg><i class="up"></i>
      </div>
    </div>
  </section>
  <aside class="tools">
    <div class="t1"><svg><use href="#stack"/></svg><hr><svg><use href="#cubet"/></svg><svg><use href="#cubet"/></svg><svg><use href="#cubel"/></svg><svg><use href="#cuber"/></svg><svg><use href="#cubef"/></svg><svg><use href="#cubeb"/></svg><hr><svg><use href="#isol"/></svg><svg><use href="#iso"/></svg><svg><use href="#iso"/></svg><svg><use href="#isol"/></svg><hr><svg><use href="#cam"/></svg><hr><svg><use href="#sel"/></svg></div>
    <div class="t2"><svg><use href="#wire"/></svg><hr><svg><use href="#sphw"/></svg><svg><use href="#sphn"/></svg><svg><use href="#sphb"/></svg><svg><use href="#spho"/></svg><hr><svg><use href="#sphs"/></svg><hr class="dots"><svg><use href="#ucs"/></svg><hr><svg><use href="#ucsb"/></svg><svg><use href="#ucsc"/></svg><hr><svg><use href="#ucsb"/></svg><svg><use href="#ucsb"/></svg><svg><use href="#ucsx"/></svg><hr><svg><use href="#ucs"/></svg><svg><use href="#ucsc"/></svg><svg><use href="#ucsc"/></svg><hr><svg><use href="#ucsx"/></svg><svg><use href="#ucsx"/></svg><svg><use href="#ucsx"/></svg><hr><svg><use href="#ucsx"/></svg></div>
    <div class="t3"><svg><use href="#dim"/></svg><svg><use href="#dal"/></svg><svg><use href="#arc"/></svg><svg><use href="#ord"/></svg><hr><svg><use href="#rad"/></svg><svg><use href="#rad"/></svg><svg><use href="#dia"/></svg><svg><use href="#ang"/></svg><hr><svg><use href="#dimq"/></svg><svg><use href="#dimb"/></svg><svg><use href="#dimc"/></svg><svg><use href="#dimi"/></svg><svg><use href="#dimx"/></svg><hr><svg><use href="#tol"/></svg><svg><use href="#cen"/></svg><svg><use href="#insp"/></svg><svg><use href="#jog"/></svg><hr><svg><use href="#ded"/></svg><svg><use href="#dtx"/></svg><svg><use href="#insp"/></svg><hr><svg><use href="#ded"/></svg></div>
    <div class="t4"><svg><use href="#solbox"/></svg><svg><use href="#solbox"/></svg><svg><use href="#solw"/></svg><svg><use href="#solc"/></svg><svg><use href="#sols"/></svg><svg><use href="#soly"/></svg><svg><use href="#solt"/></svg><svg><use href="#pyr"/></svg><svg><use href="#helix"/></svg><svg><use href="#plane"/></svg><hr><svg><use href="#bbox"/></svg><svg><use href="#bcyl"/></svg><svg><use href="#bcup"/></svg><svg><use href="#bbox"/></svg><svg><use href="#bcup"/></svg><svg><use href="#buni"/></svg><svg><use href="#bsub"/></svg><svg><use href="#stack"/></svg><hr><svg><use href="#gear3"/></svg><svg><use href="#gear3"/></svg><svg><use href="#bl"/></svg><svg><use href="#bgrid"/></svg></div>
  </aside>
</main>

<footer class="status">
  <nav class="layouts"><a class="on" href="#">Model</a><a href="#">Layout1</a><a href="#">Layout2</a><button aria-label="New layout">+</button></nav>
  <div class="sb">
    <span class="coord">39.9258, 21.0038, 0.0000</span><button class="txt">MODEL</button>
    <button aria-label="Grid"><svg><use href="#g1"/></svg></button><button aria-label="Snap"><svg><use href="#g2"/></svg></button><i class="cc"></i><button aria-label="Ortho"><svg><use href="#ortho"/></svg></button><button aria-label="Polar"><svg><use href="#polar"/></svg></button><i class="cc"></i><button aria-label="Isodraft"><svg><use href="#isod"/></svg></button><i class="cc"></i><button aria-label="Tracking"><svg><use href="#angl"/></svg></button><button class="hl" aria-label="Object snap"><svg><use href="#osnap"/></svg></button><i class="cc"></i><button class="hl" aria-label="Annotation visibility"><svg><use href="#ann"/></svg></button><button aria-label="Autoscale"><svg><use href="#ann"/></svg></button><button aria-label="Annotation scale"><svg><use href="#ann"/></svg></button><button class="ratio">1:1</button><i class="cc"></i><button aria-label="Workspace"><svg><use href="#gear"/></svg></button><i class="cc"></i><button aria-label="Monitor"><svg><use href="#plus"/></svg></button><button aria-label="Units"><svg><use href="#bar"/></svg></button><button class="dec">Decimal</button><i class="cc"></i><button aria-label="Properties"><svg><use href="#props"/></svg></button><button aria-label="Isolate objects"><svg><use href="#iso2"/></svg></button><button class="hl" aria-label="Graphics"><svg><use href="#perf"/></svg></button><button class="end" aria-label="Clean screen"><svg><use href="#full"/></svg></button><button aria-label="Customize"><svg><use href="#burger"/></svg></button>
  </div>
</footer>

<footer class="taskbar">
  <button class="orb" aria-label="Start"><svg viewBox="0 0 18 18"><circle cx="9" cy="9" r="8.500" fill="#275f94"/><circle cx="9" cy="6" r="6" fill="#5c93bd"/><path d="M4 5q2-2 4-1v4q-2-1-4 0z" fill="#e8683c"/><path d="M9 5q2 1 5-1v4q-3 2-5 1z" fill="#9fc950"/><path d="M4 9q2-1 4 0v4q-2-1-4 0z" fill="#5fc0ee"/><path d="M9 10q2 1 5-1v4q-3 2-5 1z" fill="#f7cf4d"/></svg></button>
  <button aria-label="Explorer"><svg viewBox="0 0 18 18"><path d="M1 3h7l1 1h7v12H1z" fill="#e5ca72"/><path d="M2 6h14v9H2z" fill="#f7e7a4"/><path d="M4 12h10v4H4z" fill="#8fc3df"/></svg></button>
  <button class="run" aria-label="AutoCAD"><svg viewBox="0 0 18 18"><path d="M2 16L7 2h4l5 13-3 1-2-3H7l-2 3z" fill="#c72f28"/><path d="M8 10l1-5 2 5z" fill="#f1e6e4"/><path d="M2 16l7-7-2-7z" fill="#9e211d"/></svg></button>
  <button class="run" aria-label="Chrome"><svg viewBox="0 0 18 18"><circle cx="9" cy="9" r="8" fill="#f4c935"/><path d="M9 9L2 5a8 8 0 0 1 14 0z" fill="#df4a38"/><path d="M9 9L2 5a8 8 0 0 0 6 12z" fill="#36a152"/><circle cx="9" cy="9" r="4" fill="#f2f5f8"/><circle cx="9" cy="9" r="3" fill="#4386e8"/></svg></button>
  <button class="run" aria-label="Camtasia"><svg viewBox="0 0 18 18"><path d="M1 1h16v16H1z" fill="#4b9b2c"/><path d="M13 5H6v8h7" fill="none" stroke="#fff" stroke-width="2.500"/></svg></button>
  <button class="run" aria-label="Recorder"><svg viewBox="0 0 18 18"><path d="M1 1h16v16H1z" fill="#ee5f47"/><path d="M13 5H6v8h7" fill="none" stroke="#fff" stroke-width="2.500"/></svg></button>
  <div class="tray"><span>EN</span><i class="up"></i><svg viewBox="0 0 12 12"><path d="M1 11V9h2v2zM4 11V7h2v4zM7 11V4h2v7zM10 11V1h2v10z" fill="#eaf6fc"/></svg><svg viewBox="0 0 12 12"><path d="M1 4h3l3-3v10L4 8H1z" fill="#fff"/><path d="M9 3q3 3 0 6" fill="none" stroke="#d8effb"/></svg><time>11:44<br>2019-08-10</time></div>
</footer>
</body>
</html>
```
FILE: styles.css
```
* { box-sizing: border-box; }
body {
  margin: 0;
  height: 100vh;
  display: flex;
  flex-direction: column;
  overflow: hidden;
  background: #1f2531;
  color: #c3c8d0;
  font: 6px/8px "Open Sans", "Noto Sans", sans-serif;
}
.defs { position: absolute; width: 0; height: 0; }
a { color: inherit; text-decoration: none; }
button, input, select { font: inherit; color: inherit; background: none; border: 0; padding: 0; margin: 0; }
select { appearance: none; outline: 0; min-width: 0; }
h1, h2, p { margin: 0; font: inherit; }
svg { display: block; width: 9px; height: 9px; flex: none; }
i { font-style: normal; }
.caret { flex: none; width: 4px; height: 2px; background: #c5cad2; clip-path: polygon(0 0, 100% 0, 50% 100%); }
.caret.dark { background: #333; }
.caret.dim { background: #707987; }
.caret.big { height: 4px; }
.up { flex: none; width: 4px; height: 3px; background: #333; clip-path: polygon(50% 0, 100% 100%, 0 100%); }

/* title and menu */
.top { display: flex; height: 23px; flex: none; }
.app { width: 20px; height: 21px; background: linear-gradient(#b4b6b9, #76797e); display: flex; align-items: flex-end; position: relative; }
.app svg { width: 16px; height: 19px; }
.bars { flex: 1; min-width: 0; }
.title { display: grid; grid-template-columns: 226fr 215fr 289fr; height: 12px; align-items: center; color: #d0d4da; }
.qat { display: flex; align-items: center; gap: 3px; padding-left: 5px; }
.qat button { width: 9px; }
.qat .caret { margin-left: -1px; margin-right: 1px; }
.title h1 { display: flex; gap: 7px; white-space: nowrap; }
.info { display: flex; align-items: center; height: 12px; }
.play { width: 3px; height: 4px; background: #e2e5e9; clip-path: polygon(0 0, 100% 50%, 0 100%); margin-right: 1px; }
.info input { width: 90px; height: 10px; background: #3c4356; padding: 0 2px; font-style: italic; margin: 0 4px 2px 0; }
.info input::placeholder { color: #9aa2b0; opacity: 1; }
.info > button { margin-right: 3px; }
.info svg { width: 8px; height: 8px; }
.sign { display: flex; align-items: center; gap: 3px; }
.tail { display: flex; align-items: center; gap: 4px; margin-left: auto; }
.rule { width: 1px; height: 8px; background: #3d4453; }
.help { width: 8px; height: 8px; border-radius: 50%; background: #e3e6ea; color: #1f2531; font-weight: 700; line-height: 8px; }
.win { display: flex; gap: 5px; margin: 0 2px 0 34px; }
.win svg { width: 7px; height: 7px; }
.menu { display: flex; align-items: center; gap: 10px; height: 10px; padding-left: 6px; color: #b2b8c2; }
.win.small { margin: 0 1px 0 auto; gap: 2px; }

/* ribbon */
.rtabs { display: flex; flex: none; height: 10px; padding-left: 1px; background: #232936; color: #a9b0bb; }
.rtabs a { padding: 0 5px; line-height: 10px; white-space: nowrap; }
.rtabs .on { background: #3b4155; color: #e8ebef; }
.pill { display: flex; align-items: center; gap: 3px; margin-left: 10px; }
.pill b { width: 7px; height: 4px; background: #e3e6ea; border-radius: 1px; }
.ribbon { display: grid; grid-template-columns: 115fr 110fr 75fr 139fr 42fr 113fr 35fr 50fr 39fr 32fr; flex: none; height: 49px; background: #3b4155; color: #d2d6dd; border-bottom: 1px solid #303647; }
.panel { min-width: 0; display: flex; flex-direction: column; border-right: 1px solid #2f3546; }
.body { flex: 1; display: flex; padding-top: 2px; min-height: 0; }
.panel h2 { height: 10px; display: flex; align-items: center; justify-content: center; gap: 4px; background: #373d50; padding-bottom: 1px; }
.launch { width: 3px; height: 3px; background: #aeb5c0; margin-left: auto; margin-right: 1px; }
h2:has(.launch)::before { content: ""; margin-left: auto; }
.bigb { display: flex; flex-direction: column; align-items: center; white-space: nowrap; height: 34px; flex: none; text-align: center; line-height: 8px; }
.bigb svg { width: 18px; height: 18px; margin-bottom: 1px; }
.bigb .caret { margin-top: 1px; }
.col { display: flex; flex-direction: column; }
.col button { display: flex; align-items: center; gap: 2px; height: 12px; white-space: nowrap; }
.col .caret { margin-left: 2px; }
.draw .bigb:nth-child(1) { width: 22px; }
.draw .bigb:nth-child(2) { width: 23px; }
.draw .bigb:nth-child(3) { width: 28px; }
.draw .bigb:nth-child(4) { width: 20px; }
.draw .col { padding-left: 2px; }
.modify { display: grid; grid-template-columns: 37px 36px 20px 1fr; padding-left: 3px; }
.anno .bigb:nth-child(1) { width: 24px; }
.anno .bigb:nth-child(2) { width: 31px; }
.anno .col { padding-left: 3px; }
.layers .bigb { width: 32px; }
.laycol { flex: 1; min-width: 0; }
.pick { display: flex; align-items: center; height: 10px; background: #465069; padding-right: 2px; flex: 1; min-width: 0; }
.pick select { flex: 1; height: 10px; }
.lay { gap: 1px; padding-left: 1px; margin-bottom: 2px; }
.lay select { padding-left: 3px; }
.sw { width: 7px; height: 7px; background: #fff; }
.icons { display: flex; gap: 3px; padding-left: 1px; height: 12px; }
.icons button { width: 9px; }
.block .bigb { width: 23px; }
.props .bigb { width: 32px; }
.pcol { flex: 1; min-width: 0; display: flex; flex-direction: column; gap: 2px; }
.pcol > div { display: flex; align-items: center; height: 10px; gap: 3px; padding-right: 1px; }
.wheel { width: 9px; height: 9px; border-radius: 50%; background: conic-gradient(#e9c94b, #e07a45, #cf4d6c, #6d62bb, #4387cd, #48ad8a, #9dc653, #e9c94b); }
.pick .sw { margin-left: 4px; margin-right: 5px; }
.lay .sw { margin: 0 1px; }
.pick hr { width: 32px; height: 1px; margin: 0 2px 0 1px; border: 0; background: #8d98aa; }
.groups .bigb { width: 22px; }
.groups .lit { width: 12px; background: #244a66; outline: 1px solid #4d8db3; outline-offset: -1px; }
.utils .bigb { width: 37px; }
.utils .col { padding-left: 1px; }
.clip .bigb { width: 27px; }
.view .bigb { width: 31px; }

/* file tabs */
.files { display: flex; flex: none; height: 15px; padding: 3px 0 0; border-bottom: 1px solid #474e61; color: #9ba2af; }
.files a { display: flex; justify-content: space-between; line-height: 11px; padding: 0 4px 0 8px; width: 62px; background: #2a303e; clip-path: polygon(0 100%, 4px 0, 58px 0, 100% 100%); }
.files a:first-child { width: 72px; padding-left: 16px; clip-path: none; }
.files a.on { background: #3b4155; color: #e6e9ed; padding-left: 6px; }
.files button { width: 10px; height: 10px; margin-left: 6px; border-radius: 50%; background: #303645; color: #cdd1d8; font-size: 7px; }

/* drawing area */
main { flex: 1; display: flex; min-height: 0; }
.canvas { position: relative; flex: 1; background: #212634; overflow: hidden; }
.vp { position: absolute; left: 1px; top: 3px; color: #e0e3e7; }
.drawing { position: absolute; inset: 0; width: 100%; height: 100%; }
.num { position: absolute; font: 700 24px/24px "Open Sans", sans-serif; color: #fbfb1a; }
.one { left: 280px; top: 93px; }
.two { left: 423px; top: 13px; }
.ring { position: absolute; left: 438px; top: 29px; width: 37px; height: 37px; }
.dyn { position: absolute; left: 463px; top: 54px; display: flex; gap: 2px; height: 10px; line-height: 10px; color: #20242c; }
.dyn label { width: 87px; padding-left: 2px; background: #93969c; white-space: nowrap; }
.dyn input { width: 29px; height: 10px; background: linear-gradient(#3c94ea, #3c94ea) 2px 1px / 23px 8px no-repeat #fff; color: #cfe6fb; padding-left: 2px; }
.dyn output { width: 21px; text-align: center; background: #93969c; }
.cube { position: absolute; right: 11px; top: 10px; width: 48px; height: 48px; border: 5px solid #434955; border-radius: 50%; }
.cube button { position: absolute; left: 9px; top: 9px; width: 21px; height: 21px; background: #adb1b6; color: #3a4048; font-weight: 600; }
.cube b { position: absolute; font: 700 8px/8px "Liberation Sans", sans-serif; color: #b9bec6; }
.cube .n { left: 16px; top: -4px; }
.cube .s { left: 17px; top: 33px; }
.cube .w { left: -8px; top: 16px; }
.cube .e { left: 39px; top: 16px; }
.wcs { position: absolute; right: 24px; top: 71px; width: 22px; height: 8px; border-radius: 2px; background: #8c91a0; color: #d7dae1; line-height: 8px; }
.navbar { position: absolute; right: 2px; top: 91px; width: 16px; height: 105px; background: #5c6269; }
.navbar svg { width: 16px; height: 105px; }
.axis { position: absolute; left: 0; bottom: 2px; width: 42px; height: 42px; }
.cmd { position: absolute; left: 140px; right: 140px; bottom: 0; font: 6px/8px "DejaVu Sans Mono", "Liberation Mono", monospace; }
.cmd p { width: max-content; margin: 0 0 0 28px; padding: 0 1px; background: #51545b; color: #c7c9cc; height: 8px; }
.cmd p + p { margin-top: 1px; }
.cline { display: flex; align-items: center; height: 13px; margin-top: 1px; background: #fff; color: #23262c; padding-right: 3px; }
.grip { display: flex; align-items: center; justify-content: space-around; width: 27px; height: 13px; background: #2a2f3c; padding-left: 3px; }
.grip svg { width: 7px; height: 7px; }
.cline label { display: flex; align-items: center; gap: 2px; white-space: nowrap; padding-left: 3px; }
.cline label svg { width: 7px; height: 8px; }
.cline input { flex: 1; min-width: 0; height: 10px; outline: 0; }
.cline .ptr { width: 8px; height: 9px; margin-right: 8px; }
.tools { flex: none; display: grid; grid-template-columns: 14px 13px 14px 14px; background: #3b4055; padding-top: 2px; }
.tools div { display: flex; flex-direction: column; justify-content: space-between; align-items: center; border-top: 2px dotted #697083; padding-top: 1px; margin: 0 1px; }
.tools svg { width: 9px; height: 9px; }
.tools hr { width: 11px; height: 1px; margin: 0; border: 0; background: #c3c8cf; }
.tools .dots { background: #697083; }
.t1 { height: 55%; }
.t2 { height: 82%; }
.t3 { height: 87%; }
.t4 { height: 90%; }

/* status bar */
.status { flex: none; display: flex; justify-content: space-between; height: 15px; background: #1f2531; }
.layouts { display: flex; align-items: flex-start; color: #959cab; }
.layouts a { line-height: 9px; padding: 1px 6px; }
.layouts a.on { color: #fff; font-weight: 700; background: #2d3342; padding: 1px 6px 1px 10px; }
.layouts button { width: 10px; line-height: 10px; margin-left: 4px; }
.sb { display: flex; align-items: center; height: 12px; margin-top: 1px; background: #31384a; color: #e0e4e9; padding-right: 1px; }
.sb svg { width: 8px; height: 8px; }
.sb button { width: 12px; height: 12px; display: flex; align-items: center; justify-content: center; }
.coord { width: 78px; padding-left: 3px; white-space: nowrap; }
.sb .txt { width: 25px; border-left: 1px solid #1f2531; border-right: 1px solid #1f2531; }
.cc { width: 8px; height: 2px; background: #cfd3da; clip-path: polygon(25% 0, 75% 0, 50% 100%); }
.sb .hl { background: #4a7db5; }
.sb .dec { width: 30px; }
.sb .end { margin-left: 5px; }

/* taskbar */
.taskbar { flex: none; display: flex; align-items: stretch; height: 19px; background: linear-gradient(170deg, #56c1f2 0 20%, #3fb5ec 40%, #56c4f6 60%, #41b1e2 85%, #3c9fc8); border-top: 1px solid #8bd3f2; }
.taskbar button { width: 27px; margin-right: 1px; display: flex; align-items: center; justify-content: center; }
.taskbar .orb { width: 26px; }
.taskbar svg { width: 15px; height: 15px; }
.taskbar .run { background: linear-gradient(#b7e3f6, #83cbe9); border: 1px solid #c5e9f8; border-width: 0 1px; }
.tray { display: flex; align-items: center; margin-left: auto; color: #eff9fe; gap: 6px; border-right: 4px solid #76b4cd; padding-right: 8px; }
.tray svg { width: 8px; height: 8px; }
.tray svg + svg { margin-left: -2px; }
.tray .up { background: #eff9fe; margin: 0 2px 0 6px; }
.tray time { text-align: center; line-height: 8px; margin-left: 4px; }
```
